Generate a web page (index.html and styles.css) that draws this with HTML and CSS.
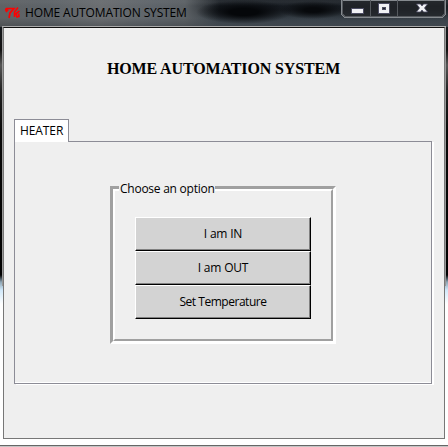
FILE: index.html
```
<!DOCTYPE html>
<html lang="en">
<head>
<meta charset="utf-8">
<title>HOME AUTOMATION SYSTEM</title>
<link rel="stylesheet" href="styles.css">
</head>
<body>
<div class="window">
  <header class="titlebar">
    <svg class="app-icon" width="16" height="14" viewBox="0 0 16 14" fill="none" stroke="#f00" stroke-width="1.7">
      <path d="M0 4.500 L1.500 2.500 H9 L5 7 L4 12 M1 6 L3 3.500"/>
      <path d="M13 1.500 L9.500 6 V11 M14.500 5 L11 7.500 L12 11 L14 10.500 L13.500 7.500" stroke-width="1.600"/>
    </svg>
    <span class="caption">HOME AUTOMATION SYSTEM</span>
    <svg class="controls" width="106" height="19" viewBox="0 0 106 19" shape-rendering="crispEdges">
      <path d="M.5 0V14.500L3.500 17.500H101.500L104.500 14.500V0Z" fill="#22252a" fill-opacity=".72" stroke="#858a8f"/>
      <path d="M1.500 0V14L4 16.500H101L103.500 14V0M29.500 0V16M56.500 0V16" fill="none" stroke="#55595e"/>
      <rect x="10" y="8" width="12" height="5" fill="#f0f1f5" stroke="#4c4d63"/>
      <path d="M37.500 3.500H48.500V13.500H37.500ZM41.500 7.500V9.500H44.500V7.500Z" fill="#f0f1f5" fill-rule="evenodd" stroke="#4c4d63"/>
      <path d="M75.500 4H79.500L81 6L82.500 4H86.500L83.500 8L86.500 12H82.500L81 10L79.500 12H75.500L78.500 8Z" fill="#f0f1f5" stroke="#4c4d63" stroke-width=".8" shape-rendering="auto"/>
    </svg>
  </header>
  <main class="client">
    <h1>HOME AUTOMATION SYSTEM</h1>
    <div class="tab">HEATER</div>
    <section class="pane">
      <fieldset class="group">
        <legend>Choose an option</legend>
        <button>I am IN</button>
        <button>I am OUT</button>
        <button>Set Temperature</button>
      </fieldset>
    </section>
  </main>
</div>
</body>
</html>
```
FILE: styles.css
```
* { box-sizing: border-box; }
body {
  margin: 0;
  font: 12px/16px "Open Sans", "Noto Sans", sans-serif;
  color: #000;
}
.window {
  width: 448px;
  height: 447px;
  background:
    linear-gradient(#666, #666) 0 445px / 448px 1px no-repeat,
    linear-gradient(#c4c4c4, #c4c4c4) 0 446px / 448px 1px no-repeat,
    linear-gradient(#999, #999) 2px 26px / 1px 260px no-repeat,
    linear-gradient(#999, #999) 445px 26px / 1px 260px no-repeat,
    linear-gradient(#39414a 0, #16191d 27px, #111 50px, #555 65px, #222 90px, #080808 130px, #000 275px, #8ca4b4 282px, #d0e8fa 290px, #fff 304px);
}
.titlebar {
  display: flex;
  align-items: flex-start;
  height: 27px;
  padding-left: 5px;
  background:
    linear-gradient(#aaa, #aaa) 2px 26px / 444px 1px no-repeat,
    radial-gradient(ellipse 48px 12px at 244px 12px, #05070a 30%, transparent),
    radial-gradient(ellipse 34px 9px at 313px 10px, #07090c 25%, transparent),
    linear-gradient(#777c8033 0 2px, transparent 6px 18px, #30353a66),
    linear-gradient(90deg, #606264, #5d6368 45px, #6b6e71 100px, #5e646a 155px, #5b6064 185px, transparent 220px),
    linear-gradient(#12171d, #1b2026 10px, #3b444c 20px, #48515a);
}
.app-icon { margin-top: 6px; }
.caption {
  width: 170px;
  margin: 5px 0 0 4px;
  letter-spacing: -.14px;
  white-space: nowrap;
}
.controls { margin-left: 146px; }
.client {
  width: 442px;
  height: 412px;
  margin-left: 3px;
  padding: 31px 11px 0 10px;
  border: 1px solid #777;
  border-top-color: #111;
  background: #efefef;
}
h1 {
  margin: 0;
  font: bold 16px/20px "Liberation Serif", serif;
  letter-spacing: -.12px;
  text-align: center;
}
.tab {
  position: relative;
  z-index: 1;
  width: 55px;
  height: 23px;
  margin-top: 40px;
  padding: 3px 0 0 5px;
  border: 1px solid #8c8c96;
  border-bottom: 0;
  background: #fff;
  letter-spacing: -.1px;
}
.pane {
  width: 418px;
  height: 243px;
  margin-top: -1px;
  padding: 39px 0 0 95px;
  border: 1px solid #8c8c96;
  box-shadow: inset 0 -1px #fff, 2px 1px #fff;
}
.group {
  position: relative;
  display: flex;
  flex-direction: column;
  width: 226px;
  height: 163px;
  margin: 0;
  padding: 36px 0 0 25px;
  border: 0;
}
.group::before {
  content: "";
  position: absolute;
  inset: 5px 0 0;
  border: 3px solid;
  border-color: #a0a0a0 #fff #fff #a0a0a0;
  pointer-events: none;
}
.group::after {
  content: "";
  position: absolute;
  inset: 8px 3px 3px;
  border: 2px solid;
  border-color: #fff #a0a0a0 #a0a0a0 #fff;
  pointer-events: none;
}
legend {
  position: absolute;
  z-index: 1;
  top: 0;
  left: 9px;
  width: 96px;
  height: 16px;
  padding: 0 0 0 1px;
  letter-spacing: -.25px;
  white-space: nowrap;
  background: #efefef;
}
button {
  flex: none;
  width: 176px;
  height: 34px;
  padding: 0;
  border: 1px solid #000;
  border-top-color: #fff;
  border-left-color: #fff;
  box-shadow: inset -1px -1px #808080;
  background: #d3d3d3;
  color: #000;
  font: inherit;
  letter-spacing: -.4px;
}
button:last-child { letter-spacing: -.47px; }
button { letter-spacing: -.2px; }
```
